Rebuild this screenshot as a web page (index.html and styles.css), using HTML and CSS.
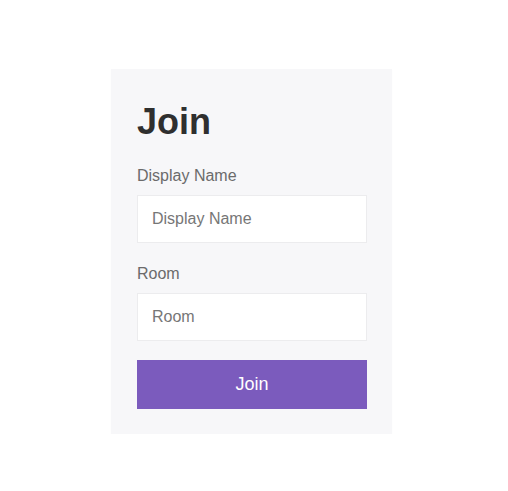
FILE: index.html
```html
<!DOCTYPE html>
<html>
<head>
<meta charset="utf-8">
<link rel="stylesheet" href="styles.css">
</head>
<body>
<div class="page">
  <form class="card">
    <h1 class="title">Join</h1>
    <label class="label" for="name">Display Name</label>
    <input class="field" id="name" type="text" placeholder="Display Name">
    <label class="label label-room" for="room">Room</label>
    <input class="field" id="room" type="text" placeholder="Room">
    <button class="btn" type="button">Join</button>
  </form>
</div>
</body>
</html>
```
FILE: styles.css
```css
html, body {
  margin: 0;
  padding: 0;
  background: #ffffff;
  font-family: "Liberation Sans", Arial, sans-serif;
}
.page {
  padding: 69px 0 0 111px;
}
.card {
  width: 281px;
  box-sizing: border-box;
  padding: 32px 25px 25px 26px;
  background: #f7f7f9;
  box-shadow: 0 1px 1px rgba(0,0,0,0.04);
  display: flex;
  flex-direction: column;
}
.title {
  margin: 0 0 25px 0;
  font-size: 36px;
  line-height: 41px;
  font-weight: bold;
  color: #2f2f2f;
}
.label {
  font-size: 16px;
  line-height: 18px;
  color: #6b6b6b;
  margin-bottom: 10px;
}
.label-room {
  margin-top: 22px;
}
.field {
  height: 48px;
  box-sizing: border-box;
  border: 1px solid #ececee;
  background: #ffffff;
  padding: 0 14px;
  font-family: "Liberation Sans", Arial, sans-serif;
  font-size: 16px;
  color: #333;
  outline: none;
  width: 100%;
}
.field::placeholder {
  color: #767676;
}
.btn {
  margin-top: 19px;
  height: 49px;
  border: none;
  background: #7b5bbd;
  color: #ffffff;
  font-family: "Liberation Sans", Arial, sans-serif;
  font-size: 18px;
  cursor: pointer;
}
```
